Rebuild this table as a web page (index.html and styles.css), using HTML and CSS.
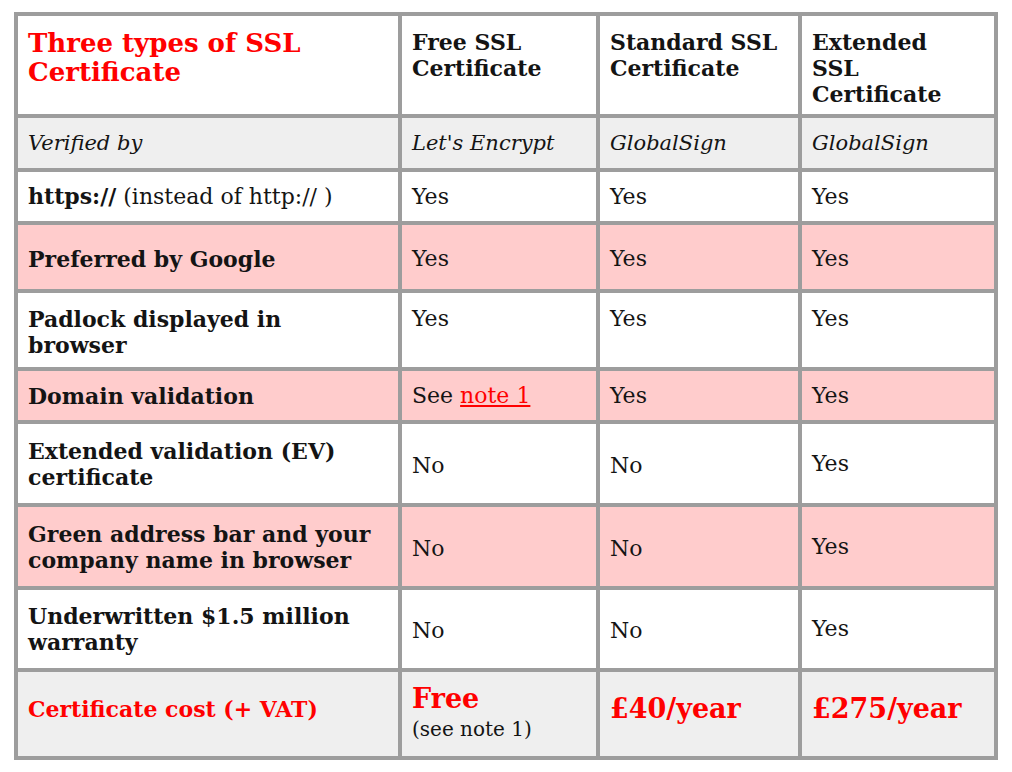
FILE: index.html
```html
<!DOCTYPE html>
<html lang="en">
<head>
<meta charset="utf-8">
<title>Three types of SSL Certificate</title>
<link rel="stylesheet" href="styles.css">
</head>
<body>
<table class="ssl">
  <colgroup>
    <col class="c1"><col class="c2"><col class="c3"><col class="c4">
  </colgroup>
  <tr class="r-head">
    <td class="title">Three types of SSL<br>Certificate</td>
    <td class="th">Free SSL<br>Certificate</td>
    <td class="th">Standard SSL<br>Certificate</td>
    <td class="th">Extended<br>SSL<br>Certificate</td>
  </tr>
  <tr class="r-verified grey">
    <td class="it">Verified by</td>
    <td class="it">Let's Encrypt</td>
    <td class="it">GlobalSign</td>
    <td class="it">GlobalSign</td>
  </tr>
  <tr class="r-https">
    <td><b>https://</b> (instead of http:// )</td>
    <td>Yes</td>
    <td>Yes</td>
    <td>Yes</td>
  </tr>
  <tr class="r-pref pink">
    <td class="lbl">Preferred by Google</td>
    <td>Yes</td>
    <td>Yes</td>
    <td>Yes</td>
  </tr>
  <tr class="r-pad">
    <td class="lbl">Padlock displayed in<br>browser</td>
    <td>Yes</td>
    <td>Yes</td>
    <td>Yes</td>
  </tr>
  <tr class="r-dom pink">
    <td class="lbl">Domain validation</td>
    <td>See <a class="note" href="#note1">note 1</a></td>
    <td>Yes</td>
    <td>Yes</td>
  </tr>
  <tr class="r-ev">
    <td class="lbl">Extended validation (EV)<br>certificate</td>
    <td class="low">No</td>
    <td class="low">No</td>
    <td>Yes</td>
  </tr>
  <tr class="r-green pink">
    <td class="lbl">Green address bar and your<br>company name in browser</td>
    <td class="low">No</td>
    <td class="low">No</td>
    <td>Yes</td>
  </tr>
  <tr class="r-under">
    <td class="lbl">Underwritten $1.5 million<br>warranty</td>
    <td class="low">No</td>
    <td class="low">No</td>
    <td>Yes</td>
  </tr>
  <tr class="r-cost grey">
    <td class="lbl red up">Certificate cost (+ VAT)</td>
    <td><span class="price">Free</span><br><span class="small">(see note 1)</span></td>
    <td class="up"><span class="price">£40/year</span></td>
    <td class="up"><span class="price">£275/year</span></td>
  </tr>
</table>
</body>
</html>
```

FILE: styles.css
```css
html, body {
  margin: 0;
  padding: 0;
  background: #ffffff;
}

body {
  font-family: "DejaVu Serif", "Liberation Serif", serif;
  color: #141414;
  font-size: 22px;
  line-height: 26px;
}

.ssl {
  margin: 12px 0 0 14px;
  width: 984px;
  table-layout: fixed;
  border-collapse: collapse;
}

.c1 { width: 384px; }
.c2 { width: 198px; }
.c3 { width: 202px; }
.c4 { width: 196px; }

.ssl td {
  border: 4px solid #9d9d9d;
  padding: 0 4px 0 10px;
  vertical-align: middle;
  text-align: left;
  white-space: nowrap;
}

.grey td { background: #efefef; }
.pink td { background: #ffcccc; }

.r-head td {
  vertical-align: top;
  padding-top: 13px;
  height: 85px;
}

.title {
  color: #ff0000;
  font-weight: bold;
  font-size: 26px;
  line-height: 29px;
}

.th {
  font-weight: bold;
}

.it {
  font-style: italic;
  font-size: 21px;
}

.lbl { font-weight: bold; }

.red { color: #ff0000; }

.r-verified td { height: 50px; }
.r-https td { height: 49px; }
.r-pref td { height: 60px; padding-top: 4px; }
.r-pad td { height: 61px; vertical-align: top; padding-top: 13px; }
.r-dom td { height: 49px; }
.r-ev td { height: 79px; }
.r-green td { height: 79px; }
.r-under td { height: 78px; }
.r-cost td { height: 84px; }

.ssl .low {
  padding-top: 4px;
}

.r-ev .low, .r-green .low { height: 75px; }
.r-under .low { height: 74px; }

.r-cost .up {
  height: 74px;
  padding-bottom: 10px;
}

.note {
  color: #ff0000;
  text-decoration: underline;
}

.price {
  color: #ff0000;
  font-weight: bold;
  font-size: 27px;
  line-height: 30px;
}

.small {
  font-size: 20px;
  line-height: 30px;
}
```
